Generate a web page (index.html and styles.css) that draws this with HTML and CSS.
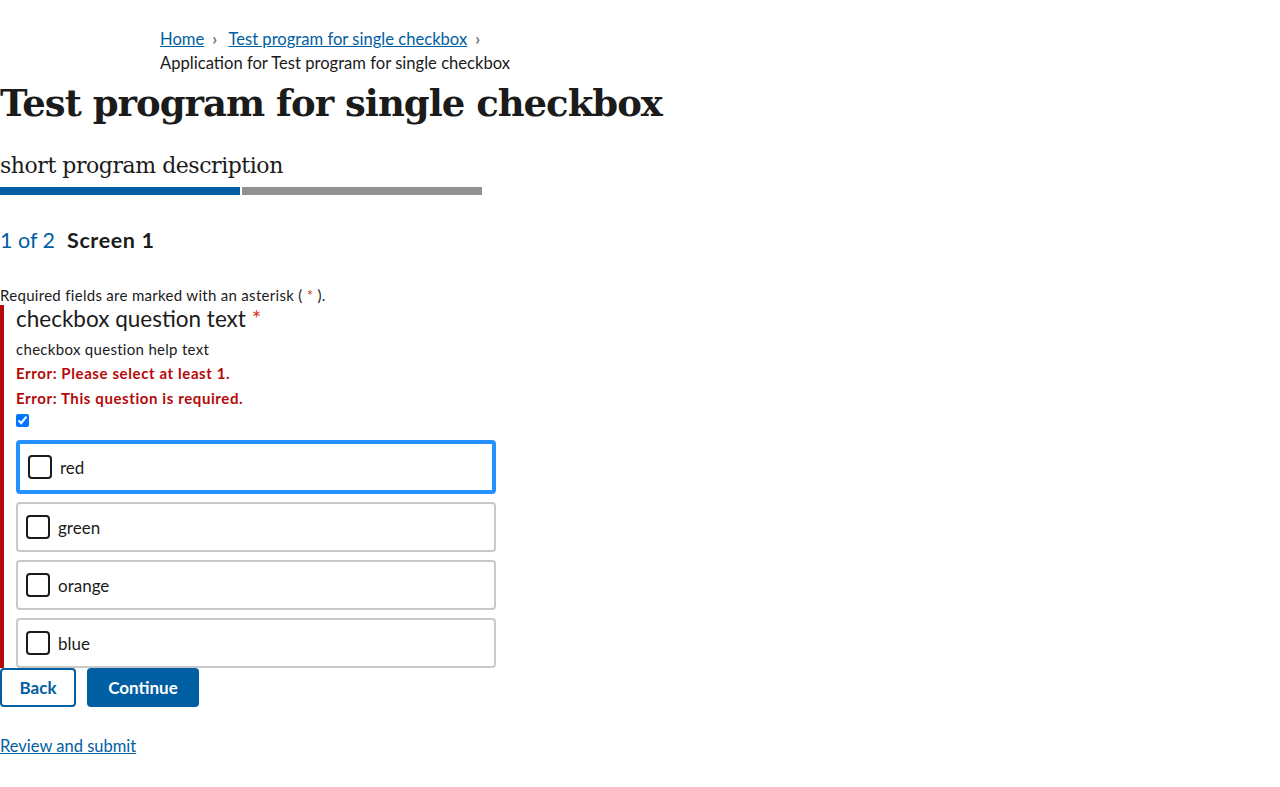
FILE: index.html
```html
<!DOCTYPE html>
<html lang="en">
<head>
<meta charset="utf-8">
<title>Application for Test program for single checkbox</title>
<link rel="stylesheet" href="styles.css">
</head>
<body>
<nav class="breadcrumb">
  <ol class="crumbs">
    <li class="crumb"><a href="#">Home</a><span class="sep">›</span></li>
    <li class="crumb"><a href="#">Test program for single checkbox</a><span class="sep">›</span></li>
    <li class="crumb current">Application for Test program for single checkbox</li>
  </ol>
</nav>
<h1 class="title">Test program for single checkbox</h1>
<p class="desc">short program description</p>
<div class="progress">
  <div class="seg done"></div>
  <div class="seg todo"></div>
</div>
<h2 class="step"><span class="count">1 of 2</span><span class="screen">Screen 1</span></h2>
<p class="required-note">Required fields are marked with an asterisk ( <span class="ast">*</span> ).</p>
<fieldset class="question">
  <legend class="qtext">checkbox question text <span class="ast">*</span></legend>
  <p class="help">checkbox question help text</p>
  <p class="error">Error: Please select at least 1.</p>
  <p class="error">Error: This question is required.</p>
  <input class="native" type="checkbox" checked>
  <div class="options">
    <label class="option focused"><span class="box"></span><span class="otext">red</span></label>
    <label class="option"><span class="box"></span><span class="otext">green</span></label>
    <label class="option"><span class="box"></span><span class="otext">orange</span></label>
    <label class="option"><span class="box"></span><span class="otext">blue</span></label>
  </div>
</fieldset>
<div class="actions">
  <button class="btn outline">Back</button>
  <button class="btn primary">Continue</button>
</div>
<a class="review" href="#">Review and submit</a>
</body>
</html>
```
FILE: styles.css
```css
html, body {
  margin: 0;
  padding: 0;
  background: #fff;
}
body {
  font-family: "Lato", "Noto Sans", sans-serif;
  color: #1b1b1b;
  font-size: 16px;
}
a {
  color: #005ea2;
}
.breadcrumb {
  padding: 27px 0 0 160px;
}
.crumbs {
  list-style: none;
  margin: 0;
  padding: 0;
  font-size: 16.6px;
  line-height: 24px;
}
.crumb {
  display: inline;
}
.crumb.current {
  display: block;
}
.sep {
  color: #71767a;
  margin: 0 7px 0 8px;
  font-size: 17px;
  font-weight: bold;
}
.title {
  font-family: "DejaVu Serif", serif;
  font-weight: bold;
  font-size: 37px;
  letter-spacing: -1px;
  line-height: 48px;
  margin: 4px 0 0 0;
}
.desc {
  font-family: "DejaVu Serif", serif;
  font-size: 22px;
  letter-spacing: -0.45px;
  line-height: 28px;
  margin: 25px 0 0 0;
}
.progress {
  display: flex;
  gap: 2px;
  margin-top: 7px;
  width: 482px;
}
.seg {
  height: 8px;
  flex: 1;
}
.seg.done { background: #005ea2; }
.seg.todo { background: #919191; }
.step {
  margin: 31px 0 0 0;
  font-size: 21.5px;
  line-height: 28px;
  display: flex;
  gap: 12px;
  font-weight: normal;
}
.count {
  color: #005ea2;
}
.screen {
  font-weight: bold;
  letter-spacing: 0.6px;
}
.required-note {
  margin: 31px 0 0 0;
  font-size: 15px;
  letter-spacing: 0.3px;
  line-height: 20px;
}
.ast {
  color: #d83933;
}
.question {
  border: 0;
  border-left: 4px solid #b50909;
  margin: 0;
  padding: 0 0 0 12px;
  min-width: 0;
}
.qtext {
  padding: 0;
  font-size: 22.5px;
  line-height: 28px;
  float: left;
  width: 100%;
  margin: 0;
}
.help {
  clear: both;
  margin: 0;
  padding-top: 5px;
  font-size: 15px;
  letter-spacing: 0.3px;
  line-height: 22px;
}
.error {
  margin: 2px 0 0 0;
  font-size: 15px;
  letter-spacing: 0.6px;
  line-height: 23px;
  font-weight: bold;
  color: #b50909;
}
.native {
  margin: 0;
  width: 13px;
  height: 13px;
  display: block;
  margin-top: 4px;
}
.options {
  display: flex;
  flex-direction: column;
  gap: 8px;
  width: 480px;
  margin-top: 13px;
}
.option {
  display: flex;
  align-items: center;
  height: 50px;
  flex: none;
  box-sizing: border-box;
  border: 2px solid #c9c9c9;
  border-radius: 4px;
  padding-left: 8px;
  font-size: 17px;
}
.option.focused {
  height: 54px;
  border: 4px solid #2491ff;
}
.box {
  width: 24px;
  height: 24px;
  box-sizing: border-box;
  border: 2px solid #1b1b1b;
  border-radius: 4px;
  margin-right: 8px;
}
.actions {
  display: flex;
  gap: 11px;
}
.btn {
  font-family: "Lato", sans-serif;
  font-weight: bold;
  font-size: 17px;
  height: 39px;
  border-radius: 4px;
  box-sizing: border-box;
  cursor: pointer;
}
.btn.outline {
  width: 76px;
  background: #fff;
  color: #005ea2;
  border: 2px solid #005ea2;
}
.btn.primary {
  width: 112px;
  background: #005ea2;
  color: #fff;
  border: 0;
}
.review {
  display: inline-block;
  margin-top: 28px;
  font-size: 16.5px;
  line-height: 22px;
}
```
